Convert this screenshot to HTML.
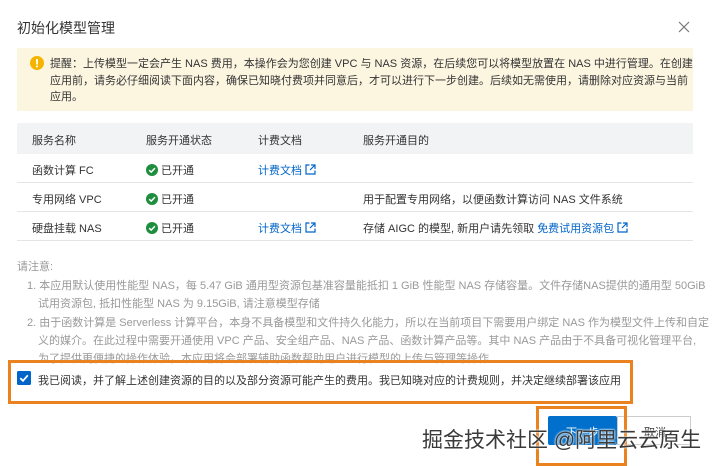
<!DOCTYPE html>
<html><head><meta charset="utf-8"><style>
*{margin:0;padding:0;box-sizing:border-box}
body{width:714px;height:463px;background:#fff;font-family:"Liberation Sans","Noto Sans CJK SC",sans-serif;color:#333;position:relative;overflow:hidden;font-size:11px}
.abs{position:absolute;white-space:nowrap}
.title{left:17px;top:18px;font-size:14px;color:#333}
.warn{left:17px;top:48px;width:676px;height:63px;background:#fcf6e1}
.warn p{position:absolute;left:33px;top:8px;width:646px;line-height:16.5px;font-size:11px;color:#333;white-space:normal}
.thead{left:17px;top:123px;width:676px;height:31px;background:#f2f3f5}
.row{left:17px;width:676px;height:29px;border-bottom:1px solid #e3e5e8}
.cell{position:absolute;top:8px;white-space:nowrap}
.link{color:#0064c8}
.note{color:#999;font-size:11px}
.cb{left:8px;top:360px;width:625px;height:44px;border:3px solid #e9821f}
.btn{left:548px;top:416px;width:69px;height:29px;background:#0070cc;border-radius:2px}
.cancel{left:617px;top:416px;width:74px;height:29px;border:1px solid #ccc;background:#fff}
.ob{left:536px;top:406px;width:91px;height:60px;border:3px solid #e9821f}
.wm{left:422px;top:424px;font-size:21px;color:#3a3a3a;text-shadow:0 0 2px #fff,0 0 2px #fff}
</style></head><body>
<div class="abs title">初始化模型管理</div>
<svg class="abs" style="left:678px;top:21px" width="12" height="12" viewBox="0 0 12 12"><path d="M1 1L11 11M11 1L1 11" stroke="#777" stroke-width="1.2"/></svg>
<div class="abs warn">
<svg style="position:absolute;left:13px;top:8px" width="14" height="14" viewBox="0 0 14 14"><circle cx="7" cy="7" r="7" fill="#f5b400"/><rect x="6.1" y="3" width="1.8" height="5.5" fill="#fff"/><rect x="6.1" y="9.5" width="1.8" height="1.8" fill="#fff"/></svg>
<p>提醒：上传模型一定会产生 NAS 费用，本操作会为您创建 VPC 与 NAS 资源，在后续您可以将模型放置在 NAS 中进行管理。在创建应用前，请务必仔细阅读下面内容，确保已知晓付费项并同意后，才可以进行下一步创建。后续如无需使用，请删除对应资源与当前应用。</p>
</div>
<div class="abs thead"><span class="cell" style="left:15px;top:9px">服务名称</span><span class="cell" style="left:129px;top:9px">服务开通状态</span><span class="cell" style="left:241px;top:9px">计费文档</span><span class="cell" style="left:346px;top:9px">服务开通目的</span></div>
<div class="abs row" style="top:154px"><span class="cell" style="left:15px">函数计算 FC</span><span class="cell" style="left:129px"><svg width="12" height="12" viewBox="0 0 12 12" style="vertical-align:-2px"><circle cx="6" cy="6" r="6" fill="#1e8e3e"/><path d="M3.2 6.2L5.2 8.1L8.9 4.2" stroke="#fff" stroke-width="1.5" fill="none"/></svg> 已开通</span><span class="cell link" style="left:241px">计费文档 <svg width="11" height="11" viewBox="0 0 11 11" style="vertical-align:-1px"><path d="M4.5 1H1V10H10V6.5M6 1H10V5M10 1L5 6" stroke="#0064c8" stroke-width="1.2" fill="none"/></svg></span></div>
<div class="abs row" style="top:183px"><span class="cell" style="left:15px">专用网络 VPC</span><span class="cell" style="left:129px"><svg width="12" height="12" viewBox="0 0 12 12" style="vertical-align:-2px"><circle cx="6" cy="6" r="6" fill="#1e8e3e"/><path d="M3.2 6.2L5.2 8.1L8.9 4.2" stroke="#fff" stroke-width="1.5" fill="none"/></svg> 已开通</span><span class="cell" style="left:346px">用于配置专用网络，以便函数计算访问 NAS 文件系统</span></div>
<div class="abs row" style="top:212px"><span class="cell" style="left:15px">硬盘挂载 NAS</span><span class="cell" style="left:129px"><svg width="12" height="12" viewBox="0 0 12 12" style="vertical-align:-2px"><circle cx="6" cy="6" r="6" fill="#1e8e3e"/><path d="M3.2 6.2L5.2 8.1L8.9 4.2" stroke="#fff" stroke-width="1.5" fill="none"/></svg> 已开通</span><span class="cell link" style="left:241px">计费文档 <svg width="11" height="11" viewBox="0 0 11 11" style="vertical-align:-1px"><path d="M4.5 1H1V10H10V6.5M6 1H10V5M10 1L5 6" stroke="#0064c8" stroke-width="1.2" fill="none"/></svg></span><span class="cell" style="left:346px">存储 AIGC 的模型, 新用户请先领取 <span class="link">免费试用资源包 <svg width="11" height="11" viewBox="0 0 11 11" style="vertical-align:-1px"><path d="M4.5 1H1V10H10V6.5M6 1H10V5M10 1L5 6" stroke="#0064c8" stroke-width="1.2" fill="none"/></svg></span></span></div>
<div class="abs note" style="left:17px;top:258px">请注意:</div>
<div class="abs note" style="left:27px;top:277px">1. 本应用默认使用性能型 NAS，每 5.47 GiB 通用型资源包基准容量能抵扣 1 GiB 性能型 NAS 存储容量。文件存储NAS提供的通用型 50GiB</div>
<div class="abs note" style="left:38px;top:295px">试用资源包, 抵扣性能型 NAS 为 9.15GiB, 请注意模型存储</div>
<div class="abs note" style="left:27px;top:314px">2. 由于函数计算是 Serverless 计算平台，本身不具备模型和文件持久化能力，所以在当前项目下需要用户绑定 NAS 作为模型文件上传和自定</div>
<div class="abs note" style="left:38px;top:332px">义的媒介。在此过程中需要开通使用 VPC 产品、安全组产品、NAS 产品、函数计算产品等。其中 NAS 产品由于不具备可视化管理平台,</div>
<div class="abs note" style="left:38px;top:350px">为了提供更便捷的操作体验，本应用将会部署辅助函数帮助用户进行模型的上传与管理等操作</div>
<div class="abs cb"></div>
<svg class="abs" style="left:17px;top:371px" width="14" height="14" viewBox="0 0 14 14"><rect width="14" height="14" rx="1.5" fill="#0064c8"/><path d="M3.3 7.2L6 9.8L10.8 4.3" stroke="#fff" stroke-width="1.8" fill="none"/></svg>
<div class="abs" style="left:38px;top:372px;color:#333">我已阅读，并了解上述创建资源的目的以及部分资源可能产生的费用。我已知晓对应的计费规则，并决定继续部署该应用</div>
<div class="abs btn"><span style="position:absolute;left:18px;top:8px;color:#fff">下一步</span></div>
<div class="abs cancel"><span style="position:absolute;left:26px;top:7px;color:#333">取消</span></div>
<div class="abs ob"></div>
<div class="abs wm">掘金技术社区 @阿里云云原生</div>
</body></html>
